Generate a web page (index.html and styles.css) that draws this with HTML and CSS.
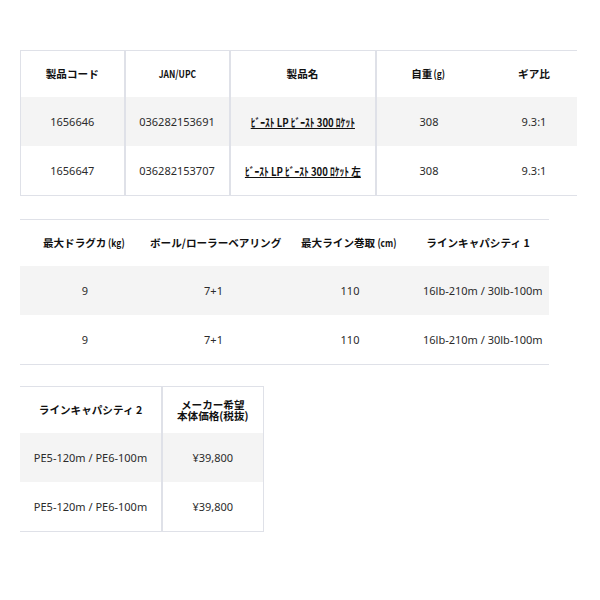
FILE: index.html
```html
<!DOCTYPE html>
<html lang="ja">
<head>
<meta charset="utf-8">
<link rel="stylesheet" href="styles.css">
</head>
<body>
<div class="page">
  <table class="spec t1">
    <colgroup><col class="c104"><col class="c105"><col class="c146"><col class="c106"><col class="c95"></colgroup>
    <tr class="head">
      <th class="sep">製品コード</th>
      <th class="sep"><span class="cond">JAN/UPC</span></th>
      <th class="sep">製品名</th>
      <th>自重<span class="cond">(g)</span></th>
      <th class="last">ギア比</th>
    </tr>
    <tr class="odd">
      <td class="sep">1656646</td>
      <td class="sep">036282153691</td>
      <td class="sep"><a class="name">ﾋﾞｰｽﾄ LP ﾋﾞｰｽﾄ 300 ﾛｹｯﾄ</a></td>
      <td>308</td>
      <td class="last">9.3:1</td>
    </tr>
    <tr>
      <td class="sep">1656647</td>
      <td class="sep">036282153707</td>
      <td class="sep"><a class="name">ﾋﾞｰｽﾄ LP ﾋﾞｰｽﾄ 300 ﾛｹｯﾄ 左</a></td>
      <td>308</td>
      <td class="last">9.3:1</td>
    </tr>
  </table>

  <table class="spec t2">
    <colgroup><col class="c130"><col class="c127"><col class="c146"><col class="c126"></colgroup>
    <tr class="head">
      <th>最大ドラグカ<span class="cond">(kg)</span></th>
      <th>ボール/ローラーベアリング</th>
      <th>最大ライン巻取<span class="cond">(cm)</span></th>
      <th class="pr">ラインキャパシティ 1</th>
    </tr>
    <tr class="odd">
      <td>9</td>
      <td>7+1</td>
      <td>110</td>
      <td class="pr">16lb-210m / 30lb-100m</td>
    </tr>
    <tr>
      <td>9</td>
      <td>7+1</td>
      <td>110</td>
      <td class="pr">16lb-210m / 30lb-100m</td>
    </tr>
  </table>

  <table class="spec t3">
    <colgroup><col class="c142"><col class="c101"></colgroup>
    <tr class="head">
      <th class="sep">ラインキャパシティ 2</th>
      <th class="right two"><span class="ln">メーカー希望</span><span class="ln">本体価格(税抜)</span></th>
    </tr>
    <tr class="odd">
      <td class="sep">PE5-120m / PE6-100m</td>
      <td class="right">¥39,800</td>
    </tr>
    <tr>
      <td class="sep">PE5-120m / PE6-100m</td>
      <td class="right">¥39,800</td>
    </tr>
  </table>
</div>
</body>
</html>
```

FILE: styles.css
```css
html, body {
  margin: 0;
  padding: 0;
  background: #ffffff;
}

.page {
  display: flex;
  flex-direction: column;
  align-items: flex-start;
  gap: 23px;
  padding: 50px 0 0 20px;
  font-family: "Noto Sans", "Noto Sans CJK JP", sans-serif;
}

.spec {
  border-collapse: collapse;
  table-layout: fixed;
  border-top: 1px solid #dfe1e8;
  border-bottom: 1px solid #dfe1e8;
}

.t1 { width: 556px; border-left: 1px solid #dfe1e8; }
.t2 { width: 529px; }
.t3 { width: 243px; margin-top: -2px; }

.c104 { width: 104px; }
.c105 { width: 105px; }
.c146 { width: 146px; }
.c106 { width: 106px; }
.c95 { width: 95px; }
.c130 { width: 130px; }
.c127 { width: 127px; }
.c126 { width: 126px; }
.c142 { width: 142px; }
.c101 { width: 101px; }

th, td {
  padding: 0;
  text-align: center;
  vertical-align: middle;
  white-space: nowrap;
}

th {
  height: 46px;
  font-family: "Noto Sans CJK JP", sans-serif;
  font-weight: 700;
  font-size: 10.6px;
  color: #111111;
  line-height: 12px;
}

td {
  height: 49px;
  font-size: 11px;
  color: #2b2b2b;
}

.odd td { background: #f4f4f4; }

.sep { border-right: 2px solid #dfe1e8; }
.right { border-right: 1px solid #dfe1e8; }

.last { padding-left: 10px; }
.pr { padding-right: 16px; }

.ln {
  display: block;
  line-height: 11px;
  height: 11px;
  overflow: visible;
}

.cond {
  display: inline-block;
  transform: scaleX(0.8);
}

.name {
  display: inline-block;
  font-family: "Noto Sans CJK JP", sans-serif;
  font-weight: 700;
  color: #111111;
  text-decoration: underline;
  font-size: 11.5px;
  transform: scaleX(0.83);
}
```
